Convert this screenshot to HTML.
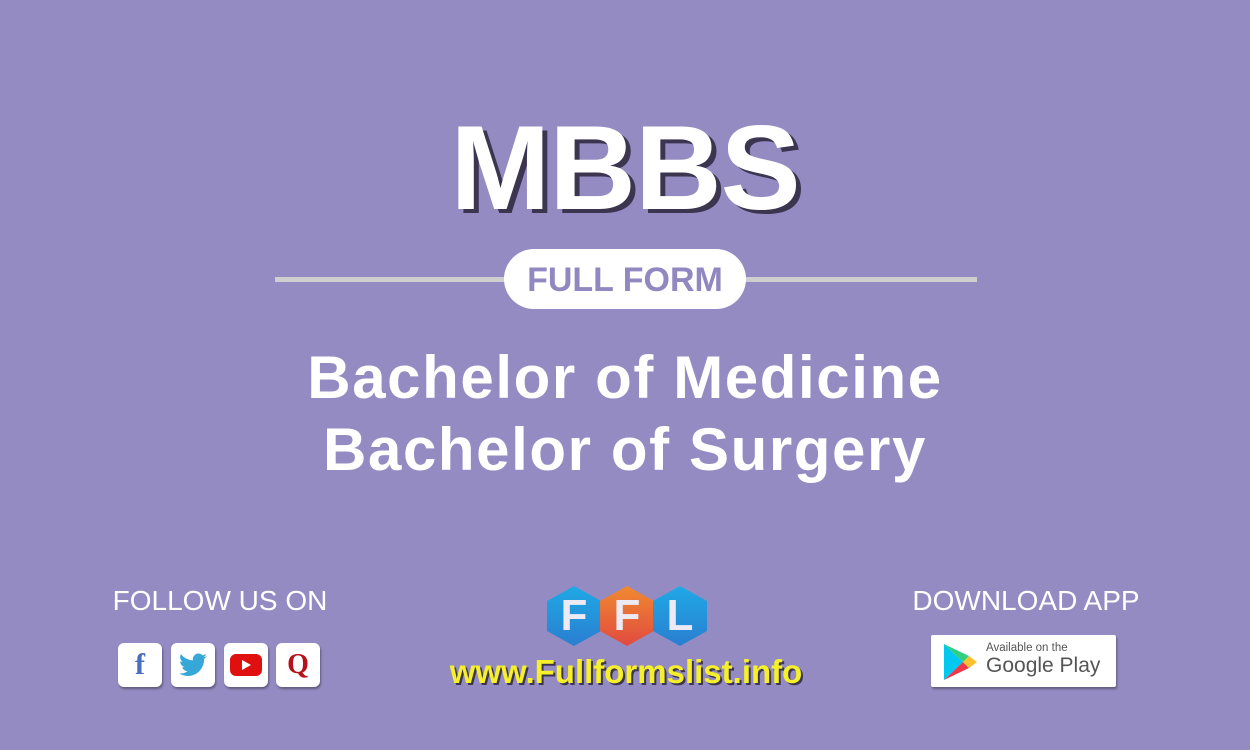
<!DOCTYPE html>
<html><head><style>
*{margin:0;padding:0;box-sizing:border-box}
body{width:1250px;height:750px;background:#948bc2;font-family:"Liberation Sans",sans-serif;position:relative;overflow:hidden;color:#fff}
.abs{position:absolute}
.mbbs{left:0;width:1250px;top:99px;text-align:center;font-size:120px;font-weight:bold;letter-spacing:-1px;text-shadow:5px 4px 0 #3b3550}
.line{left:275px;width:702px;top:277px;height:5px;background:#cfcfcf}
.pill{left:504px;top:249px;width:242px;height:60px;background:#fff;border-radius:30px;color:#9188c2;font-weight:bold;font-size:34px;text-align:center;line-height:62px}
.t{left:0;width:1250px;text-align:center;font-weight:bold;font-size:60px;letter-spacing:1.6px}
.s{font-size:28px;text-align:center}
.ic{top:643px;width:44px;height:44px;background:#fff;border-radius:6px;box-shadow:1px 2px 2px rgba(0,0,0,.35);display:flex;align-items:center;justify-content:center}
.hex{top:586px;width:54px;height:60px;clip-path:polygon(50% 0,100% 25%,100% 75%,50% 100%,0 75%,0 25%);display:flex;align-items:center;justify-content:center;font-weight:bold;font-size:44px;color:#ecebf5}
</style></head><body>
<div class="abs mbbs">MBBS</div>
<div class="abs line"></div>
<div class="abs pill">FULL FORM</div>
<div class="abs t" style="top:343px">Bachelor of Medicine</div>
<div class="abs t" style="top:415px">Bachelor of Surgery</div>

<div class="abs s" style="left:90px;width:260px;top:585px">FOLLOW US ON</div>
<div class="abs ic" style="left:118px"><span style="color:#4a6fc0;font-weight:bold;font-size:30px;font-family:'Liberation Serif',serif">f</span></div>
<div class="abs ic" style="left:171px"><svg width="28" height="24" viewBox="0 0 24 20"><path fill="#36a8d8" d="M24 2.4a10 10 0 0 1-2.8.8 5 5 0 0 0 2.2-2.7 10 10 0 0 1-3.1 1.2A4.9 4.9 0 0 0 11.9 6 14 14 0 0 1 1.7.8a4.9 4.9 0 0 0 1.5 6.6A5 5 0 0 1 1 6.8a4.9 4.9 0 0 0 3.9 4.9 5 5 0 0 1-2.2.1 4.9 4.9 0 0 0 4.6 3.4A9.9 9.9 0 0 1 0 17.2 14 14 0 0 0 7.5 19.4c9 0 14-7.5 14-14v-.6A10 10 0 0 0 24 2.4z"/></svg></div>
<div class="abs ic" style="left:224px"><svg width="32" height="22" viewBox="0 0 32 22"><rect width="32" height="22" rx="6" fill="#e01010"/><path d="M12 6l9 5-9 5z" fill="#fff"/></svg></div>
<div class="abs ic" style="left:276px"><span style="color:#b5121b;font-weight:bold;font-size:28px;font-family:'Liberation Serif',serif">Q</span></div>

<div class="abs hex" style="left:547px;background:linear-gradient(#1fa9e6,#2a7ed0)">F</div>
<div class="abs hex" style="left:600px;background:linear-gradient(#f08a30,#e04a40)">F</div>
<div class="abs hex" style="left:653px;background:linear-gradient(#1fa9e6,#2a7ed0)">L</div>
<div class="abs" style="left:400px;width:452px;top:653px;text-align:center;color:#f5f02a;font-weight:bold;font-size:33px;text-shadow:2px 2px 0 #3b3550">www.Fullformslist.info</div>

<div class="abs s" style="left:890px;width:272px;top:585px">DOWNLOAD APP</div>
<div class="abs" style="left:931px;top:635px;width:185px;height:52px;background:#fff;border-radius:2px;box-shadow:1px 2px 2px rgba(0,0,0,.35)">
<svg class="abs" style="left:13px;top:9px" width="33" height="36" viewBox="0 0 33 36"><path d="M0 0l19 18L0 36z" fill="#00c8f0"/><path d="M0 0l25 12-6 6z" fill="#30d080"/><path d="M0 36l25-12-6-6z" fill="#f0384a"/><path d="M25 12l8 6-8 6-6-6z" fill="#fbc02d"/></svg>
<div class="abs" style="left:55px;top:7px;font-size:11.5px;color:#555">Available on the</div>
<div class="abs" style="left:55px;top:19px;font-size:21px;color:#555">Google Play</div>
</div>
</body></html>
